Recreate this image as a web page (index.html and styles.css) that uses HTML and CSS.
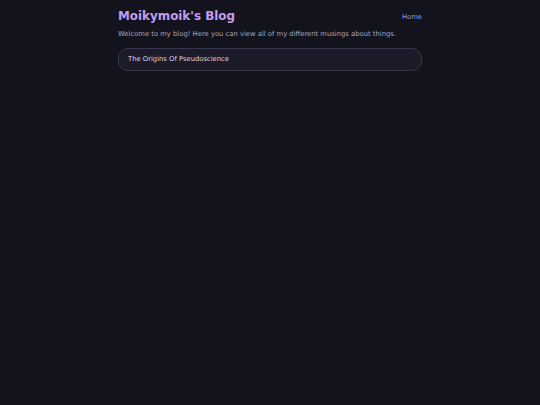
FILE: index.html
```html
<!DOCTYPE html>
<html>
<head>
<meta charset="utf-8">
<link rel="stylesheet" href="styles.css">
</head>
<body>
<div class="page">
  <header class="header">
    <h1 class="title">Moikymoik's Blog</h1>
    <a class="nav-link" href="#">Home</a>
  </header>
  <p class="intro">Welcome to my blog! Here you can view all of my different musings about things.</p>
  <div class="post-list">
    <a class="post-card" href="#">The Origins Of Pseudoscience</a>
  </div>
</div>
</body>
</html>
```

FILE: styles.css
```css
html, body {
  margin: 0;
  padding: 0;
  background: #13131d;
  height: 100%;
}
body {
  font-family: "DejaVu Sans", sans-serif;
  color: #b8b8c8;
}
.page {
  width: 304px;
  margin: 0 auto;
  padding-top: 8px;
}
.header {
  display: flex;
  justify-content: space-between;
  align-items: center;
}
.title {
  margin: 0;
  font-size: 11.9px;
  line-height: 16px;
  font-weight: bold;
  color: #c49cf0;
}
.nav-link {
  padding-top: 2px;
  font-size: 6.8px;
  line-height: 14px;
  color: #8d9ee8;
  text-decoration: none;
}
.intro {
  margin: 5px 0 0;
  font-size: 6.8px;
  line-height: 10px;
  color: #a8a8ba;
}
.post-list {
  margin-top: 9px;
}
.post-card {
  display: block;
  padding: 6px 9px;
  font-size: 6.8px;
  line-height: 9px;
  color: #d8d8ea;
  text-decoration: none;
  background: #1c1b2a;
  border: 1px solid #36354c;
  border-radius: 10px;
}
```
